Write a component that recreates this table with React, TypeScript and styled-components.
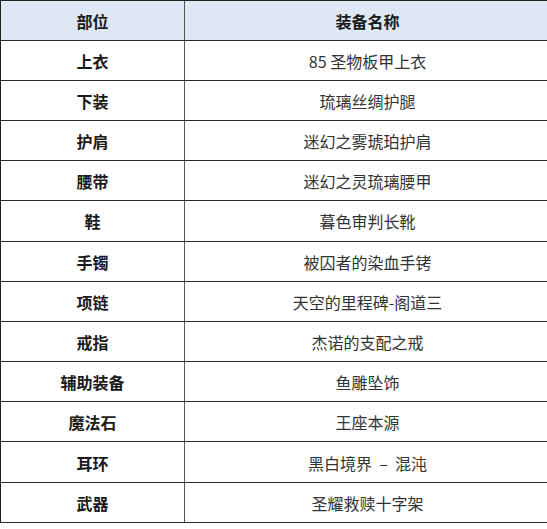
import { FC } from "react";
import styled, { createGlobalStyle } from "styled-components";

type Item = {
  slot: string;
  name: string;
};

const items: Item[] = [
  { slot: "上衣", name: "85 圣物板甲上衣" },
  { slot: "下装", name: "琉璃丝绸护腿" },
  { slot: "护肩", name: "迷幻之雾琥珀护肩" },
  { slot: "腰带", name: "迷幻之灵琉璃腰甲" },
  { slot: "鞋", name: "暮色审判长靴" },
  { slot: "手镯", name: "被囚者的染血手铐" },
  { slot: "项链", name: "天空的里程碑-阁道三" },
  { slot: "戒指", name: "杰诺的支配之戒" },
  { slot: "辅助装备", name: "鱼雕坠饰" },
  { slot: "魔法石", name: "王座本源" },
  { slot: "耳环", name: "黑白境界\u00a0\u00a0–\u00a0\u00a0混沌" },
  { slot: "武器", name: "圣耀救赎十字架" },
];

const GlobalStyle = createGlobalStyle`
  html, body {
    margin: 0;
    padding: 0;
    overflow: hidden;
    background: #ffffff;
  }
  body {
    font-family: "Noto Sans CJK SC", "Noto Sans", "Liberation Sans", sans-serif;
    color: #111;
  }
`;

const App: FC = () => {
  return (
    <>
      <GlobalStyle />
      <Table>
        <HeaderRow>
          <SlotCell>部位</SlotCell>
          <NameCell head>装备名称</NameCell>
        </HeaderRow>
        {items.map((item) => (
          <Row key={item.slot}>
            <SlotCell>{item.slot}</SlotCell>
            <NameCell>{item.name}</NameCell>
          </Row>
        ))}
      </Table>
    </>
  );
};

export default App;

const Table = styled.div`
  width: 551px;
  display: flex;
  flex-flow: column;
  border-top: 1px solid #222;
  border-left: 1px solid #222;
  border-right: 1px solid #222;
  box-sizing: border-box;
`;

const Row = styled.div`
  display: grid;
  grid-template-columns: 184px 1fr;
  height: 40.2px;
  box-sizing: border-box;
  border-bottom: 1px solid #2a2a2a;
  background: #ffffff;
`;

const HeaderRow = styled(Row)`
  height: 39.6px;
  background: #dde8f4;
`;

const SlotCell = styled.div`
  display: flex;
  align-items: center;
  justify-content: center;
  border-right: 1px solid #555;
  font-size: 16px;
  font-weight: bold;
  color: #1a1a1a;
  padding-top: 1px;
`;

const NameCell = styled.div<{ head?: boolean }>`
  display: flex;
  align-items: center;
  justify-content: center;
  font-size: 16px;
  font-weight: ${({ head }) => (head ? "bold" : "normal")};
  color: ${({ head }) => (head ? "#1a1a1a" : "#333")};
  padding-top: 1px;
  white-space: pre;
`;
